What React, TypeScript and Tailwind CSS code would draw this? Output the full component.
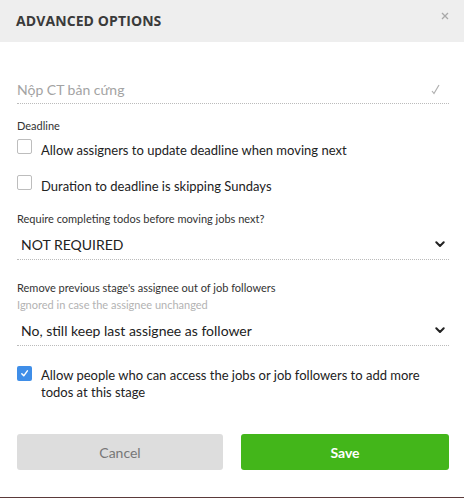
import React from "react";

const font = { fontFamily: 'Lato, "Open Sans", sans-serif' };
const titleFont = { fontFamily: '"Open Sans", sans-serif' };

function Box({ checked }: { checked?: boolean }) {
  if (checked) {
    return (
      <span className="mt-[-1px] flex h-[15px] w-[15px] shrink-0 items-center justify-center rounded-[2px] bg-[#3f8ee8]">
        <svg width="9" height="9" viewBox="0 0 10 10" fill="none">
          <path d="M2 5.2 L4.2 7.6 L8.2 2" stroke="white" strokeWidth="1.6" strokeLinecap="round" strokeLinejoin="round" />
        </svg>
      </span>
    );
  }
  return <span className="mt-[-2px] h-[15px] w-[15px] shrink-0 rounded-[2px] border border-[#bdbdbd] bg-white" />;
}

function Chevron() {
  return (
    <svg width="10" height="7" viewBox="0 0 10 7" fill="none">
      <path d="M1.3 1.3 L5 5 L8.7 1.3" stroke="#222" strokeWidth="2" strokeLinecap="round" strokeLinejoin="round" />
    </svg>
  );
}

export default function App() {
  return (
    <div className="relative h-[498px] w-[464px] overflow-hidden bg-white text-[#222]" style={font}>
      <div className="flex h-[42px] items-start justify-between bg-[#eeeeee] pl-[16px] pr-[15px]" style={titleFont}>
        <div className="pt-[10px] text-[14px] font-bold tracking-[0.1px] text-[#3a3a3a]">ADVANCED OPTIONS</div>
        <svg className="mt-[12px]" width="8" height="8" viewBox="0 0 8 8">
          <path d="M1 1 L7 7 M7 1 L1 7" stroke="#a8a8a8" strokeWidth="1.3" />
        </svg>
      </div>

      <div className="pl-[17px] pr-[15px] pt-[35px]">
        <div className="flex h-[27px] items-center justify-between border-b border-dotted border-[#bbbbbb] pb-[1px]">
          <span className="text-[14px] text-[#a3a3a3]">Nộp CT bản cứng</span>
          <svg className="mr-[9px]" width="9" height="11" viewBox="0 0 9 11" fill="none">
            <path d="M1 7 L3 9.5 L8 1" stroke="#b0b0b0" strokeWidth="1.2" />
          </svg>
        </div>

        <div className="mt-[14px] text-[11px] leading-[15px] text-[#333]">Deadline</div>
        <div className="mt-[8px] flex items-start gap-[9px]">
          <Box />
          <span className="text-[13px] leading-[19px]">Allow assigners to update deadline when moving next</span>
        </div>
        <div className="mt-[17px] flex items-start gap-[9px]">
          <Box />
          <span className="text-[13px] leading-[19px]">Duration to deadline is skipping Sundays</span>
        </div>

        <div className="mt-[15px] text-[11px] leading-[15px] text-[#333]">Require completing todos before moving jobs next?</div>
        <div className="mt-[3px] flex h-[31px] items-center justify-between border-b border-dotted border-[#bbbbbb] pl-[4px] pr-[4px]">
          <span className="text-[14px]">NOT REQUIRED</span>
          <Chevron />
        </div>

        <div className="mt-[20px] text-[11px] leading-[15px] text-[#333]">Remove previous stage's assignee out of job followers</div>
        <div className="mt-[2px] text-[11px] leading-[15px] text-[#b3b3b3]">Ignored in case the assignee unchanged</div>
        <div className="mt-[3px] flex h-[31px] items-center justify-between border-b border-dotted border-[#bbbbbb] pl-[4px] pr-[4px]">
          <span className="text-[14px]">No, still keep last assignee as follower</span>
          <Chevron />
        </div>

        <div className="mt-[21px] flex items-start gap-[9px]">
          <Box checked />
          <span className="text-[13px] leading-[17px]">Allow people who can access the jobs or job followers to add more todos at this stage</span>
        </div>

        <div className="mt-[33px] flex gap-[18px]">
          <button className="flex h-[36px] w-[206px] items-center justify-center rounded-[3px] bg-[#dddddd] text-[14px] text-[#777]">Cancel</button>
          <button className="flex h-[36px] flex-1 items-center justify-center rounded-[3px] bg-[#43b61a] text-[14px] font-bold text-white">Save</button>
        </div>
      </div>
      <div className="absolute bottom-0 left-0 h-[1px] w-full bg-[#5b3a3a]" />
    </div>
  );
}
